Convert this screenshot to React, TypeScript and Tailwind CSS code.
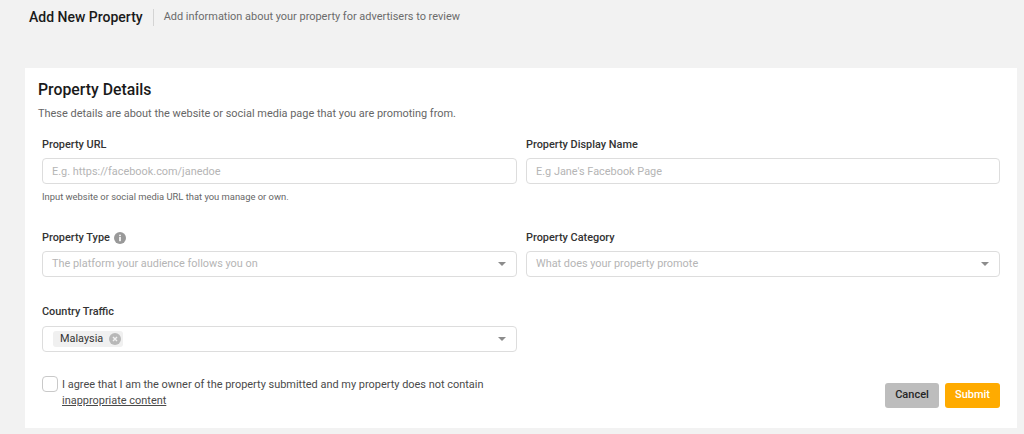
const ChevronDown = () => (
  <svg width="8" height="4" viewBox="0 0 8 4" className="shrink-0">
    <path d="M0 0h8L4 4z" fill="#8c8c8c" />
  </svg>
);

const InfoIcon = () => (
  <svg width="12" height="12" viewBox="0 0 12 12">
    <circle cx="6" cy="6" r="6" fill="#999999" />
    <rect x="5.2" y="5" width="1.6" height="4.2" fill="#fff" />
    <rect x="5.2" y="2.7" width="1.6" height="1.5" fill="#fff" />
  </svg>
);

const ClearIcon = () => (
  <svg width="12" height="12" viewBox="0 0 12 12">
    <circle cx="6" cy="6" r="6" fill="#b8b8b8" />
    <path d="M4 4l4 4M8 4l-4 4" stroke="#f0f0f0" strokeWidth="1.4" />
  </svg>
);

const Label = ({ children }: { children: React.ReactNode }) => (
  <label className="flex h-[14px] items-center gap-[4px] text-[10.9px] leading-[14px] font-medium text-[#333333]">
    {children}
  </label>
);

const TextField = ({ placeholder }: { placeholder: string }) => (
  <div className="flex h-[26px] items-center rounded-[4px] border border-[#dddddd] bg-white px-[9px] pt-[2px] text-[10.9px] text-[#b5b5b5]">
    {placeholder}
  </div>
);

const SelectField = ({ children }: { children: React.ReactNode }) => (
  <div className="flex h-[26px] items-center justify-between rounded-[4px] border border-[#dddddd] bg-white pr-[10px] pl-[9px] text-[10.9px] text-[#b5b5b5]">
    {children}
    <ChevronDown />
  </div>
);

export default function App() {
  return (
    <div className="h-[434px] w-[1024px] overflow-hidden bg-[#f2f2f2] font-['Roboto',sans-serif]">
      <header className="flex h-[68px] items-start pt-[9px] pl-[29px]">
        <h1 className="flex h-[17px] items-center text-[14px] leading-[17px] font-medium text-[#1a1a1a]">
          Add New Property
        </h1>
        <div className="mx-[10px] h-[17px] w-px bg-[#d4d4d4]" />
        <p className="flex h-[17px] items-center text-[10.95px] text-[#6b6b6b]">
          Add information about your property for advertisers to review
        </p>
      </header>

      <main className="ml-[25px] h-[360px] w-[992px] bg-white px-[17px] pt-[12px]">
        <h2 className="-ml-[4px] text-[15.8px] leading-[19px] font-medium text-[#1a1a1a]">
          Property Details
        </h2>
        <p className="mt-[8px] -ml-[4px] text-[10.95px] leading-[14px] text-[#666666]">
          These details are about the website or social media page that you are promoting from.
        </p>

        <div className="mt-[17px] grid grid-cols-[475px_474px] gap-x-[9px]">
          <div>
            <Label>Property URL</Label>
            <div className="mt-[6px]">
              <TextField placeholder="E.g. https://facebook.com/janedoe" />
            </div>
            <p className="mt-[7px] text-[9.4px] leading-[12px] text-[#666666]">
              Input website or social media URL that you manage or own.
            </p>
          </div>
          <div>
            <Label>Property Display Name</Label>
            <div className="mt-[6px]">
              <TextField placeholder="E.g Jane's Facebook Page" />
            </div>
          </div>

          <div className="mt-[28px]">
            <Label>
              Property Type <InfoIcon />
            </Label>
            <div className="mt-[6px]">
              <SelectField>
                <span className="pt-[1px]">The platform your audience follows you on</span>
              </SelectField>
            </div>
          </div>
          <div className="mt-[28px]">
            <Label>Property Category</Label>
            <div className="mt-[6px]">
              <SelectField>
                <span className="pt-[1px]">What does your property promote</span>
              </SelectField>
            </div>
          </div>

          <div className="mt-[28px]">
            <Label>Country Traffic</Label>
            <div className="mt-[7px]">
              <SelectField>
                <span className="ml-[1px] flex h-[16px] items-center gap-[6px] rounded-[3px] bg-[#f0f0f0] pr-[2px] pl-[7px] text-[10.9px] text-[#333333]">
                  Malaysia <ClearIcon />
                </span>
              </SelectField>
            </div>
          </div>
        </div>

        <div className="mt-[25px] flex items-start justify-between">
          <div className="flex items-start gap-[4px]">
            <span className="-mt-[1px] h-[16px] w-[16px] rounded-[4px] border border-[#c9c9c9] bg-white" />
            <p className="w-[440px] text-[10.95px] leading-[16px] text-[#4a4a4a]">
              I agree that I am the owner of the property submitted and my property does not contain{" "}
              <a className="underline">inappropriate content</a>
            </p>
          </div>
          <div className="mt-[6px] flex gap-[6px]">
            <button className="h-[25px] w-[54px] rounded-[3px] bg-[#bdbdbd] text-[11px] font-medium text-[#262626]">
              Cancel
            </button>
            <button className="h-[25px] w-[55px] rounded-[3px] bg-[#ffab00] text-[11px] font-medium text-white">
              Submit
            </button>
          </div>
        </div>
      </main>
    </div>
  );
}
